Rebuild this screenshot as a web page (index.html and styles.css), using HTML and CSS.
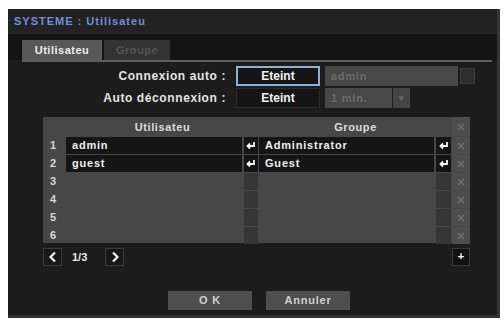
FILE: index.html
```html
<!DOCTYPE html>
<html lang="fr">
<head>
    <meta charset="UTF-8">
    <title>SYSTEME : Utilisateu</title>
    <link rel="stylesheet" href="styles.css">
</head>
<body>
    <div class="window">
        <div class="title">SYSTEME : Utilisateu</div>
        <div class="tabbar">
            <div class="tab active">Utilisateu</div>
            <div class="tab">Groupe</div>
        </div>
        <div class="rule"></div>

        <div class="form">
            <div class="frow">
                <span class="label">Connexion auto :</span>
                <span class="btn sel">Eteint</span>
                <span class="field wide">admin</span>
                <span class="mini"></span>
            </div>
            <div class="frow">
                <span class="label">Auto déconnexion :</span>
                <span class="btn">Eteint</span>
                <span class="field short">1 min.</span>
                <span class="mini arrow">▾</span>
            </div>
        </div>

        <div class="table">
            <div class="hd"></div>
            <div class="hd span2">Utilisateu</div>
            <div class="hd span2">Groupe</div>
            <div class="del"><svg viewBox="0 0 8 8"><path d="M1 1L7 7M7 1L1 7"/></svg></div>

            <div class="num">1</div>
            <div class="cell used">admin</div>
            <div class="ret used"><svg viewBox="0 0 10 9"><path d="M8 1V5H2M4 2.5L1.5 5L4 7.5"/></svg></div>
            <div class="cell used">Administrator</div>
            <div class="ret used"><svg viewBox="0 0 10 9"><path d="M8 1V5H2M4 2.5L1.5 5L4 7.5"/></svg></div>
            <div class="del"><svg viewBox="0 0 8 8"><path d="M1 1L7 7M7 1L1 7"/></svg></div>

            <div class="num">2</div>
            <div class="cell used">guest</div>
            <div class="ret used"><svg viewBox="0 0 10 9"><path d="M8 1V5H2M4 2.5L1.5 5L4 7.5"/></svg></div>
            <div class="cell used">Guest</div>
            <div class="ret used"><svg viewBox="0 0 10 9"><path d="M8 1V5H2M4 2.5L1.5 5L4 7.5"/></svg></div>
            <div class="del"><svg viewBox="0 0 8 8"><path d="M1 1L7 7M7 1L1 7"/></svg></div>

            <div class="num">3</div>
            <div class="cell"></div>
            <div class="ret"></div>
            <div class="cell"></div>
            <div class="ret"></div>
            <div class="del"><svg viewBox="0 0 8 8"><path d="M1 1L7 7M7 1L1 7"/></svg></div>

            <div class="num">4</div>
            <div class="cell"></div>
            <div class="ret"></div>
            <div class="cell"></div>
            <div class="ret"></div>
            <div class="del"><svg viewBox="0 0 8 8"><path d="M1 1L7 7M7 1L1 7"/></svg></div>

            <div class="num">5</div>
            <div class="cell"></div>
            <div class="ret"></div>
            <div class="cell"></div>
            <div class="ret"></div>
            <div class="del"><svg viewBox="0 0 8 8"><path d="M1 1L7 7M7 1L1 7"/></svg></div>

            <div class="num">6</div>
            <div class="cell"></div>
            <div class="ret"></div>
            <div class="cell"></div>
            <div class="ret"></div>
            <div class="del"><svg viewBox="0 0 8 8"><path d="M1 1L7 7M7 1L1 7"/></svg></div>
        </div>

        <div class="pager">
            <span class="nav"><svg viewBox="0 0 10 12"><path d="M7 1.5L2.5 6L7 10.5"/></svg></span>
            <span class="page">1/3</span>
            <span class="nav"><svg viewBox="0 0 10 12"><path d="M3 1.5L7.5 6L3 10.5"/></svg></span>
            <span class="add">+</span>
        </div>

        <div class="actions">
            <span class="action">O K</span>
            <span class="action">Annuler</span>
        </div>
    </div>
</body>
</html>
```

FILE: styles.css
```css
body {
    margin: 0;
    padding: 9px 0 0 8px;
    background-color: #fff;
    font-family: "Liberation Sans", Arial, sans-serif;
    font-weight: bold;
}

.window {
    width: 489px;
    height: 306px;
    background-color: #1c1c1c;
    border-right: 3px solid #353535;
    border-bottom: 3px solid #303030;
    color: #e8e8e8;
}

.title {
    height: 25px;
    padding-left: 6px;
    background-color: #222;
    color: #6f8fd8;
    font-size: 11px;
    line-height: 25px;
    letter-spacing: 1px;
}

.tabbar {
    display: flex;
    gap: 2px;
    height: 20px;
    padding: 6px 0 0 14px;
    background-color: #141414;
}

.tab {
    width: 66px;
    height: 20px;
    background-color: #333;
    color: #555;
    font-size: 11px;
    line-height: 21px;
    text-align: center;
    letter-spacing: 0.5px;
}

.tab.active {
    width: 80px;
    background-color: #585858;
    color: #ececec;
}

.rule {
    height: 2px;
    margin: 0 5px 0 14px;
    background-color: #5e5e5e;
}

.form {
    display: flex;
    flex-direction: column;
    gap: 2px;
    margin-top: 4px;
}

.frow {
    display: flex;
    align-items: center;
    height: 20px;
}

.label {
    width: 218px;
    padding-right: 10px;
    text-align: right;
    font-size: 12px;
    letter-spacing: 0.6px;
    color: #e4e4e4;
}

.btn {
    box-sizing: border-box;
    width: 84px;
    height: 20px;
    background-color: #151515;
    border: 1px solid #2c2c2c;
    font-size: 12px;
    line-height: 18px;
    text-align: center;
    color: #f2f2f2;
}

.btn.sel {
    border: 2px solid #8fb0d8;
    line-height: 16px;
}

.field {
    height: 20px;
    margin-left: 5px;
    padding-left: 6px;
    box-sizing: border-box;
    background-color: #484848;
    color: #6c6c6c;
    font-size: 11px;
    line-height: 20px;
    letter-spacing: 0.8px;
}

.field.wide {
    width: 133px;
}

.field.short {
    width: 67px;
}

.mini {
    box-sizing: border-box;
    width: 15px;
    height: 16px;
    margin-left: 2px;
    background-color: #2e2e2e;
    border: 1px solid #3c3c3c;
}

.mini.arrow {
    width: 17px;
    height: 20px;
    margin-left: 1px;
    background-color: #454545;
    border: none;
    color: #666;
    font-size: 9px;
    line-height: 20px;
    text-align: center;
}

.table {
    display: grid;
    grid-template-columns: 23px 176px 17px 175px 18px 18px;
    grid-template-rows: 19px repeat(6, 17px);
    row-gap: 1px;
    width: 427px;
    height: 126px;
    margin: 9px 0 0 35px;
    background-color: #474747;
}

.hd {
    font-size: 11px;
    line-height: 20px;
    text-align: center;
    color: #dcdcdc;
    letter-spacing: 0.6px;
}

.span2 {
    grid-column: span 2;
}

.num {
    padding-left: 7px;
    font-size: 11px;
    line-height: 17px;
    color: #d8d8d8;
}

.cell {
    font-size: 11px;
    line-height: 17px;
    padding-left: 6px;
    letter-spacing: 0.8px;
}

.cell.used {
    background-color: #151515;
    color: #f0f0f0;
}

.ret {
    margin: 0 1px 0 2px;
    background-color: #363636;
    display: flex;
    align-items: center;
    justify-content: center;
}

.ret.used {
    background-color: #151515;
}

.ret svg {
    width: 10px;
    height: 9px;
    fill: none;
    stroke: #f4f4f4;
    stroke-width: 1.8;
}

.del {
    display: flex;
    align-items: center;
    justify-content: center;
    background-color: #4d4d4d;
}

.del svg {
    width: 8px;
    height: 8px;
    fill: none;
    stroke: #707070;
    stroke-width: 1.4;
}

.pager {
    display: flex;
    align-items: center;
    height: 18px;
    margin: 5px 0 0 35px;
    width: 427px;
}

.nav {
    box-sizing: border-box;
    display: flex;
    align-items: center;
    justify-content: center;
    width: 19px;
    height: 18px;
    background-color: #181818;
    border: 1px solid #3a3a3a;
}

.nav svg {
    width: 10px;
    height: 12px;
    fill: none;
    stroke: #f0f0f0;
    stroke-width: 2.2;
}

.page {
    width: 43px;
    padding-left: 10px;
    box-sizing: border-box;
    font-size: 11px;
    color: #e8e8e8;
}

.add {
    box-sizing: border-box;
    width: 18px;
    height: 18px;
    margin-left: auto;
    background-color: #121212;
    border: 1px solid #3a3a3a;
    font-size: 11px;
    line-height: 15px;
    text-align: center;
    color: #fff;
}

.actions {
    display: flex;
    gap: 14px;
    margin: 25px 0 0 160px;
}

.action {
    width: 84px;
    height: 19px;
    background-color: #4e4e4e;
    color: #cfcfcf;
    font-size: 11px;
    line-height: 19px;
    text-align: center;
    letter-spacing: 0.8px;
}
```
